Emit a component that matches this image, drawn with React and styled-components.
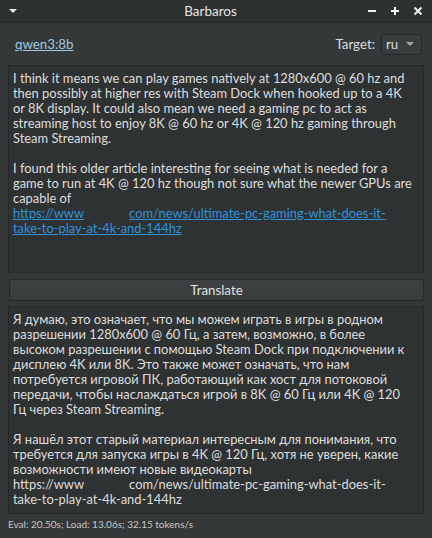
import { createGlobalStyle, styled } from "styled-components";

const GlobalStyle = createGlobalStyle`
  html, body {
    margin: 0;
    padding: 0;
    background: #353839;
  }
  body {
    font-family: Lato, "Noto Sans", sans-serif;
    color: #dcdcdc;
  }
`;

const source = [
  "I think it means we can play games natively at 1280x600 @ 60 hz and",
  "then possibly at higher res with Steam Dock when hooked up to a 4K",
  "or 8K display. It could also mean we need a gaming pc to act as",
  "streaming host to enjoy 8K @ 60 hz or 4K @ 120 hz gaming through",
  "Steam Streaming.",
  "",
  "I found this older article interesting for seeing what is needed for a",
  "game to run at 4K @ 120 hz though not sure what the newer GPUs are",
  "capable of",
];

const translated = [
  "Я думаю, это означает, что мы можем играть в игры в родном",
  "разрешении 1280x600 @ 60 Гц, а затем, возможно, в более",
  "высоком разрешении с помощью Steam Dock при подключении к",
  "дисплею 4K или 8K. Это также может означать, что нам",
  "потребуется игровой ПК, работающий как хост для потоковой",
  "передачи, чтобы наслаждаться игрой в 8K @ 60 Гц или 4K @ 120",
  "Гц через Steam Streaming.",
  "",
  "Я нашёл этот старый материал интересным для понимания, что",
  "требуется для запуска игры в 4K @ 120 Гц, хотя не уверен, какие",
  "возможности имеют новые видеокарты",
];

const App = () => {
  return (
    <>
      <GlobalStyle />
      <Window>
        <TitleBar>
          <svg width="12" height="8" viewBox="0 0 12 8">
            <path d="M2 2h8l-4 4z" fill="#e6e6e6" />
          </svg>
          <Title>Barbaros</Title>
          <Controls>
            <svg width="12" height="12" viewBox="0 0 12 12">
              <path d="M2 6h8" stroke="#f0f0f0" strokeWidth="2" />
            </svg>
            <svg width="12" height="12" viewBox="0 0 12 12">
              <path d="M2 6h8M6 2v8" stroke="#f0f0f0" strokeWidth="2" />
            </svg>
            <svg width="12" height="12" viewBox="0 0 12 12">
              <path d="M2.5 2.5l7 7M9.5 2.5l-7 7" stroke="#f0f0f0" strokeWidth="2" />
            </svg>
          </Controls>
        </TitleBar>

        <Content>
          <TopRow>
            <ModelLink>qwen3:8b</ModelLink>
            <TargetLabel>
              Target:
              <Select>
                ru
                <svg width="8" height="5" viewBox="0 0 8 5">
                  <path d="M0 0h8l-4 4z" fill="#a8aaab" />
                </svg>
              </Select>
            </TargetLabel>
          </TopRow>

          <TextPanel>
            {source.map((line, i) => (
              <Line key={i}>{line || "\u00a0"}</Line>
            ))}
            <Link>
              <Line>
                https://www<Redacted />com/news/ultimate-pc-gaming-what-does-it-
              </Line>
              <Line>take-to-play-at-4k-and-144hz</Line>
            </Link>
          </TextPanel>

          <Button>Translate</Button>

          <TextPanel>
            {translated.map((line, i) => (
              <Line key={i}>{line || "\u00a0"}</Line>
            ))}
            <Line>
              https://www<Redacted />com/news/ultimate-pc-gaming-what-does-it-
            </Line>
            <Line>take-to-play-at-4k-and-144hz</Line>
          </TextPanel>

          <Status>Eval: 20.50s; Load: 13.06s; 32.15 tokens/s</Status>
        </Content>
      </Window>
    </>
  );
};

export default App;

const Window = styled.div`
  width: 432px;
  height: 538px;
  display: flex;
  flex-direction: column;
  background: #353839;
  overflow: hidden;
`;

const TitleBar = styled.div`
  height: 22px;
  flex-shrink: 0;
  display: flex;
  align-items: center;
  padding: 0 8px 0 7px;
  background: #2e3132;
  border-bottom: 1px solid #2a2c2d;
`;

const Title = styled.div`
  flex: 1;
  text-align: center;
  font-size: 13.5px;
  color: #e4e4e4;
  padding-left: 36px;
`;

const Controls = styled.div`
  display: flex;
  gap: 11px;
  align-items: center;
`;

const Content = styled.div`
  flex: 1;
  display: flex;
  flex-direction: column;
  padding: 0 8px 0 8px;
`;

const TopRow = styled.div`
  height: 42px;
  display: flex;
  align-items: center;
  justify-content: space-between;
  padding: 0 2px 0 7px;
`;

const ModelLink = styled.span`
  font-size: 13.3px;
  color: #9fc8dc;
  text-decoration: underline;
`;

const TargetLabel = styled.label`
  display: flex;
  align-items: center;
  gap: 6px;
  font-size: 13.3px;
  color: #dcdcdc;
`;

const Select = styled.div`
  width: 41px;
  height: 21px;
  box-sizing: border-box;
  display: flex;
  align-items: center;
  justify-content: space-between;
  padding: 0 7px 0 4px;
  border: 1px solid #232526;
  border-radius: 3px;
  background: #3a3d3e;
  font-size: 13.3px;
`;

const TextPanel = styled.div`
  height: 208px;
  box-sizing: border-box;
  padding: 5px 4px;
  background: #2f3233;
  border: 1px solid #262829;
  font-size: 12.9px;
  line-height: 15px;
  color: #dedede;
`;

const Line = styled.div`
  white-space: nowrap;
  height: 15px;
`;

const Link = styled.div`
  color: #2f93db;
  text-decoration: underline;
`;

const Redacted = styled.span`
  display: inline-block;
  width: 45px;
`;

const Button = styled.div`
  height: 20px;
  margin: 6px 0 5px 1px;
  display: flex;
  align-items: center;
  justify-content: center;
  border: 1px solid #262829;
  border-radius: 3px;
  background: linear-gradient(#3e4142, #393c3d);
  font-size: 13.3px;
  color: #e0e0e0;
`;

const Status = styled.div`
  font-size: 10px;
  color: #c8c8c8;
  padding: 4px 0 0 0;
`;
